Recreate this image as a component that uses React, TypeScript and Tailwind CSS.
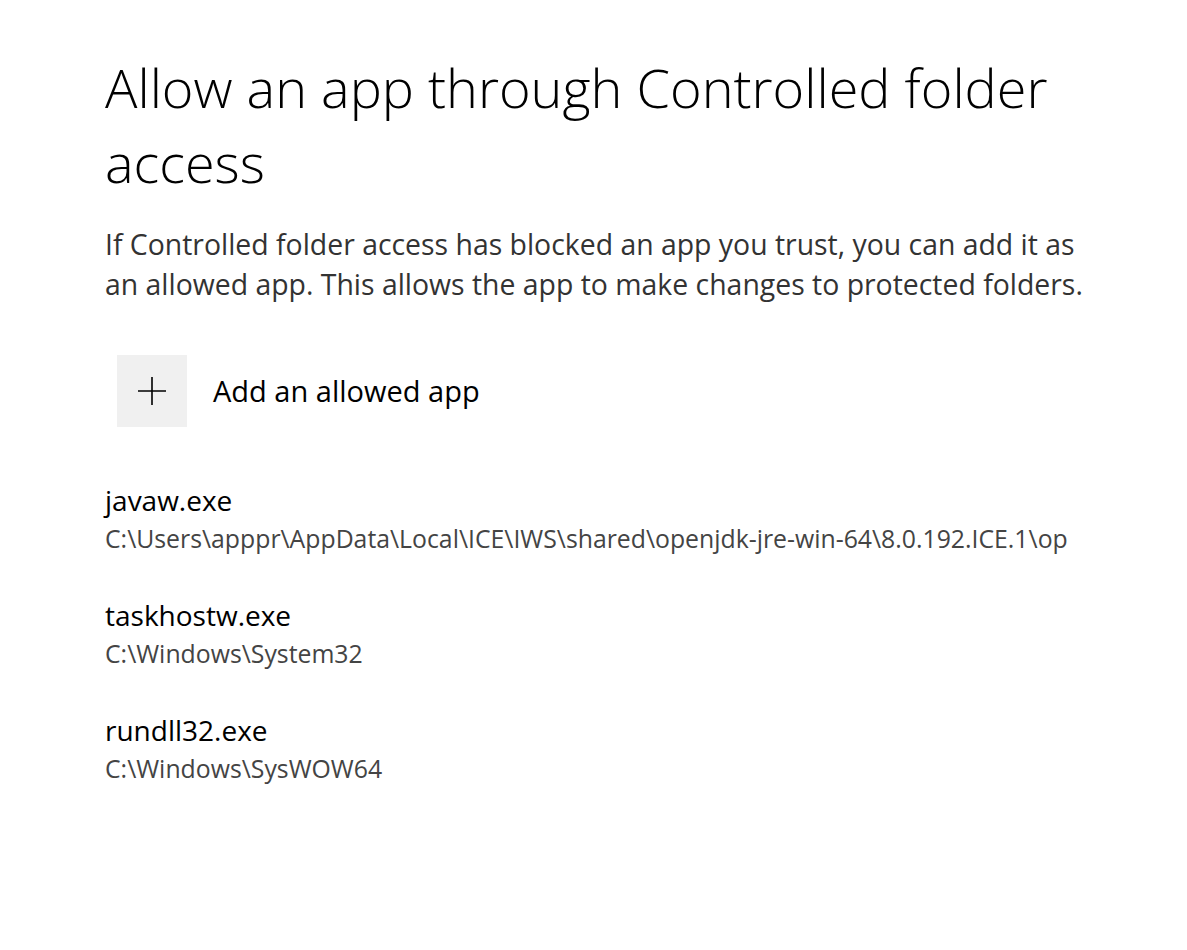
import React from "react";

const apps = [
  {
    name: "javaw.exe",
    path: "C:\\Users\\apppr\\AppData\\Local\\ICE\\IWS\\shared\\openjdk-jre-win-64\\8.0.192.ICE.1\\op",
  },
  { name: "taskhostw.exe", path: "C:\\Windows\\System32" },
  { name: "rundll32.exe", path: "C:\\Windows\\SysWOW64" },
];

const font = { fontFamily: '"Open Sans", "Noto Sans", sans-serif' };

export default function App() {
  return (
    <div className="min-h-[950px] w-[1187px] bg-white pl-[105px] pt-[50px]" style={font}>
      {/* Heading */}
      <h1 className="w-[1000px] text-[54px] font-light leading-[75px] text-black">
        Allow an app through Controlled folder access
      </h1>

      <p className="mt-[24px] text-[28.4px] leading-[40px] text-[#333333]">
        If Controlled folder access has blocked an app you trust, you can add it as
        <br />
        an allowed app. This allows the app to make changes to protected folders.
      </p>

      {/* Add button */}
      <button className="mt-[51px] ml-[12px] flex items-center gap-[26px] text-left">
        <span className="flex h-[72px] w-[70px] items-center justify-center bg-[#f0f0f0]">
          <svg width="30" height="30" viewBox="0 0 30 30" fill="none" stroke="#000" strokeWidth="1.6">
            <path d="M15 1v28M1 15h28" />
          </svg>
        </span>
        <span className="text-[29px] text-black">Add an allowed app</span>
      </button>

      {/* Allowed apps */}
      <div className="mt-[53px] flex flex-col gap-[39px]">
        {apps.map((app) => (
          <div key={app.name} className="flex flex-col">
            <span className="text-[28px] leading-[40px] text-black">{app.name}</span>
            <span className="whitespace-nowrap text-[24.8px] leading-[36px] text-[#444444]">{app.path}</span>
          </div>
        ))}
      </div>
    </div>
  );
}
